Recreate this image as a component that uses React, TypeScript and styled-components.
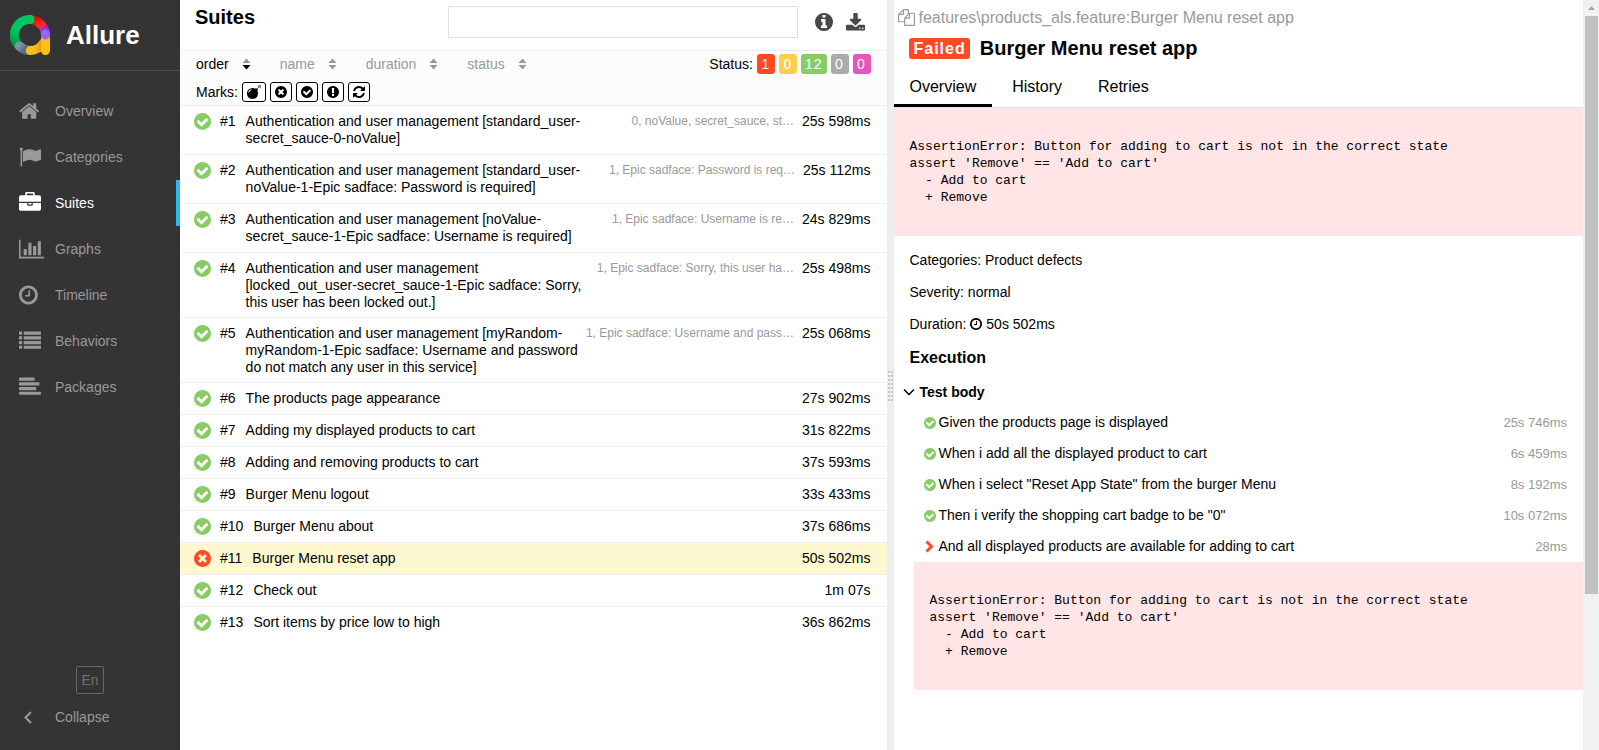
import React from 'react';
import styled, { createGlobalStyle } from 'styled-components';

const GlobalStyle = createGlobalStyle`
  *, *::before, *::after { box-sizing: border-box; }
  body {
    margin: 0;
    background: #fff;
    color: #000;
    font: 14px/17px "Liberation Sans", Arial, sans-serif;
  }
  button, input { font: inherit; color: inherit; margin: 0; }
  a { color: inherit; text-decoration: none; }
  h1, h2, h3, ul, p, pre { margin: 0; padding: 0; font-size: inherit; }
  ul { list-style: none; }
`;

const colors = {
  failed: '#ff4a24',
  broken: '#ffce4f',
  passed: '#88cc66',
  skipped: '#aaaaaa',
  unknown: '#e754bc',
};

/* ---------- icons ---------- */

const DISC =
  'm768 0q0 209-103 385.5t-279.5 279.5-385.5 103-385.5-103-279.5-279.5-103-385.5 103-385.5 279.5-279.5 385.5-103 385.5 103 279.5 279.5 103 385.5z';

const glyphs = {
  home: {
    box: '64 0 1792 1792',
    d: 'M1472 992v480q0 26-19 45t-45 19h-384v-384h-256v384h-384q-26 0-45-19t-19-45v-480q0-1 .5-3t.5-3l575-474 575 474q1 2 1 6zm223-69l-62 74q-8 9-21 11h-3q-13 0-21-7l-692-577-692 577q-12 8-24 7-13-2-21-11l-62-74q-8-10-7-23.5t11-21.5l719-599q32-26 76-26t76 26l244 204v-195q0-14 9-23t23-9h192q14 0 23 9t9 23v408l219 182q10 8 11 21.5t-7 23.5z',
  },
  flag: {
    box: '0 0 1792 1792',
    d: 'M320 256q0 72-64 110v1266q0 13-9.5 22.5t-22.5 9.5h-64q-13 0-22.5-9.5t-9.5-22.5v-1266q-64-38-64-110 0-53 37.5-90.5t90.5-37.5 90.5 37.5 37.5 90.5zm1472 64v763q0 25-12.5 38.5t-39.5 27.5q-215 116-369 116-61 0-123.5-22t-108.5-48-115.5-48-142.5-22q-192 0-464 146-17 9-33 9-26 0-45-19t-19-45v-742q0-32 31-55 21-14 79-43 236-120 421-120 107 0 200 29t219 88q38 19 88 19 54 0 117.5-21t110-47 88-47 54.5-21q26 0 45 19t19 45z',
  },
  briefcase: {
    box: '0 0 1792 1792',
    d: 'M640 256h512v-128h-512v128zm1152 640v480q0 66-47 113t-113 47h-1472q-66 0-113-47t-47-113v-480h672v160q0 26 19 45t45 19h320q26 0 45-19t19-45v-160h672zm-768 0v128h-256v-128h256zm768-480v384h-1792v-384q0-66 47-113t113-47h352v-160q0-40 28-68t68-28h576q40 0 68 28t28 68v160h352q66 0 113 47t47 113z',
  },
  chart: {
    box: '0 0 2048 1792',
    d: 'M640 896v512h-256v-512h256zm384-512v1024h-256v-1024h256zm1024 1152v128h-2048v-1536h128v1408h1920zm-640-896v768h-256v-768h256zm384-384v1152h-256v-1152h256z',
  },
  clock: {
    box: '128 0 1792 1792',
    d: 'M1024 544v448q0 14-9 23t-23 9h-320q-14 0-23-9t-9-23v-64q0-14 9-23t23-9h224v-352q0-14 9-23t23-9h64q14 0 23 9t9 23zm416 352q0-148-73-273t-198-198-273-73-273 73-198 198-73 273 73 273 198 198 273 73 273-73 198-198 73-273zM896 896' + DISC,
  },
  list: {
    box: '0 0 1792 1792',
    d: 'M0 128h256v256H0zM384 128h1408v256H384zM0 512h256v256H0zM384 512h1408v256H384zM0 896h256v256H0zM384 896h1408v256H384zM0 1280h256v256H0zM384 1280h1408v256H384z',
  },
  align: {
    box: '0 0 1792 1792',
    d: 'M64 128h1152q64 0 64 64v128q0 64-64 64H64q-64 0-64-64V192q0-64 64-64zM64 512h1536q64 0 64 64v128q0 64-64 64H64q-64 0-64-64V576q0-64 64-64zM64 896h1280q64 0 64 64v128q0 64-64 64H64q-64 0-64-64V960q0-64 64-64zM64 1280h1664q64 0 64 64v128q0 64-64 64H64q-64 0-64-64v-128q0-64 64-64z',
  },
  check: {
    box: '128 128 1536 1536',
    d: 'M1412 734q0-28-18-46l-91-90q-19-19-45-19t-45 19l-408 407-226-226q-19-19-45-19t-45 19l-91 90q-18 18-18 46 0 27 18 45l362 362q19 19 45 19 27 0 46-19l543-543q18-18 18-45zM896 896' + DISC,
  },
  cross: {
    box: '128 128 1536 1536',
    d: 'M1277 1122q0-26-19-45l-181-181 181-181q19-19 19-45 0-27-19-46l-90-90q-19-19-46-19-26 0-45 19l-181 181-181-181q-19-19-45-19-27 0-46 19l-90 90q-19 19-19 46 0 26 19 45l181 181-181 181q-19 19-19 45 0 27 19 46l90 90q19 19 46 19 26 0 45-19l181-181 181 181q19 19 45 19 27 0 46-19l90-90q19-19 19-46zM896 896' + DISC,
  },
  exclamation: {
    box: '128 128 1536 1536',
    d: 'M1024 1375v-190q0-14-9-23.5t-22-9.5h-192q-13 0-23 10t-10 23v190q0 13 10 23t23 10h192q13 0 22-9.5t9-23.5zm-2-344l18-621q0-12-10-18-10-8-24-8h-220q-14 0-24 8-10 6-10 18l17 621q0 10 10 17.5t24 7.5h185q14 0 23.5-7.5t10.5-17.5zM896 896' + DISC,
  },
  info: {
    box: '128 128 1536 1536',
    d: 'M1152 1376v-160q0-14-9-23t-23-9h-96v-512q0-14-9-23t-23-9h-320q-14 0-23 9t-9 23v160q0 14 9 23t23 9h96v320h-96q-14 0-23 9t-9 23v160q0 14 9 23t23 9h448q14 0 23-9t9-23zm-128-896v-160q0-14-9-23t-23-9h-192q-14 0-23 9t-9 23v160q0 14 9 23t23 9h192q14 0 23-9t9-23zM896 896' + DISC,
  },
  download: {
    box: '64 0 1664 1664',
    d: 'M1344 1344q0-26-19-45t-45-19-45 19-19 45 19 45 45 19 45-19 19-45zm256 0q0-26-19-45t-45-19-45 19-19 45 19 45 45 19 45-19 19-45zm128-224v320q0 40-28 68t-68 28h-1472q-40 0-68-28t-28-68v-320q0-40 28-68t68-28h465l135 136q58 56 136 56t136-56l136-136h464q40 0 68 28t28 68zm-325-569q17 41-14 70l-448 448q-18 19-45 19t-45-19l-448-448q-31-29-14-70 17-39 59-39h256v-448q0-26 19-45t45-19h256q26 0 45 19t19 45v448h256q42 0 59 39z',
  },
  refresh: {
    box: '128 128 1536 1536',
    d: 'M1639 1056q0 5-1 7-64 268-268 434.5t-478 166.5q-146 0-282.5-55t-243.5-157l-129 129q-19 19-45 19t-45-19-19-45v-448q0-26 19-45t45-19h448q26 0 45 19t19 45-19 45l-137 137q71 66 161 102t187 36q134 0 250-65t186-179q11-17 53-117 8-23 30-23h192q13 0 22.5 9.5t9.5 22.5zm25-800v448q0 26-19 45t-45 19h-448q-26 0-45-19t-19-45 19-45l138-138q-148-137-349-137-134 0-250 65t-186 179q-11 17-53 117-8 23-30 23h-199q-13 0-22.5-9.5t-9.5-22.5v-7q65-268 270-434.5t480-166.5q146 0 284 55.5t245 156.5l130-129q19-19 45-19t45 19 19 45z',
  },
  bomb: {
    box: '0 0 1792 1792',
    d: 'M571 589q-10-25-34-35t-49 0q-108 44-191 127t-127 191q-10 25 0 49t35 34q13 5 24 5 42 0 60-40 34-84 98.5-148.5t148.5-98.5q25-11 35-35t0-49zm942-356l46 46-244 243 68 68q19 19 19 45.5t-19 45.5l-64 64q89 161 89 343 0 143-55.5 273.5t-150 225-225 150-273.5 55.5-273.5-55.5-225-150-150-225-55.5-273.5 55.5-273.5 150-225 225-150 273.5-55.5q182 0 343 89l64-64q19-19 45.5-19t45.5 19l68 68zm8-56q-10 10-22 10-13 0-23-10l-91-90q-9-10-9-23t9-23q10-9 23-9t23 9l90 91q10 9 10 22.5t-10 22.5zm230 230q-11 9-23 9t-23-9l-90-91q-10-9-10-22.5t10-22.5q9-10 22.5-10t22.5 10l91 90q9 10 9 23t-9 23zm41-183q0 14-9 23t-23 9h-96q-14 0-23-9t-9-23 9-23 23-9h96q14 0 23 9t9 23zm-192-192v96q0 14-9 23t-23 9-23-9-9-23v-96q0-14 9-23t23-9 23 9 9 23zm151 55l-91 90q-10 10-22 10-13 0-23-10-10-9-10-22.5t10-22.5l90-91q10-9 23-9t23 9q9 10 9 23t-9 23z',
  },
  files: {
    box: '0 0 1792 1792',
    d: 'M1696 384q40 0 68 28t28 68v1216q0 40-28 68t-68 28h-960q-40 0-68-28t-28-68v-288h-544q-40 0-68-28t-28-68v-672q0-40 20-88t48-76l408-408q28-28 76-48t88-20h416q40 0 68 28t28 68v328q68-40 128-40h416zm-544 213l-299 299h299v-299zm-640-384l-299 299h299v-299zm196 647l316-316v-416h-384v416q0 40-28 68t-68 28h-416v640h512v-256q0-40 20-88t48-76zm956 804v-1152h-384v416q0 40-28 68t-68 28h-416v640h896z',
  },
};

type GlyphName = keyof typeof glyphs;

const Svg = styled.svg`
  display: block;
  flex: none;
`;

function Glyph({ name, size, width, color }: { name: GlyphName; size: number; width?: number; color?: string }) {
  const g = glyphs[name];
  return (
    <Svg width={width ?? size} height={size} viewBox={g.box} fill={color ?? 'currentColor'} fillRule="evenodd" aria-hidden="true">
      <path d={g.d} />
    </Svg>
  );
}

function Logo() {
  return (
    <Svg width="40" height="40" viewBox="0 0 120 120" fill="none" strokeWidth="27" strokeLinecap="round" aria-hidden="true">
      <defs>
        <linearGradient id="purple" x1="0" y1="0" x2="0" y2="1">
          <stop offset="0" stopColor="#7a1fc0" />
          <stop offset="1" stopColor="#9664ff" />
        </linearGradient>
        <linearGradient id="red" x1="0" y1="0" x2="1" y2="1">
          <stop offset="0" stopColor="#f00000" />
          <stop offset="1" stopColor="#ff2a2a" />
        </linearGradient>
        <linearGradient id="green" x1="0" y1="1" x2="0.4" y2="0">
          <stop offset="0" stopColor="#00a04a" />
          <stop offset="0.6" stopColor="#00c764" />
        </linearGradient>
        <linearGradient id="slate" x1="0" y1="0" x2="1" y2="0.6">
          <stop offset="0" stopColor="#8391a8" />
          <stop offset="1" stopColor="#5f6e86" />
        </linearGradient>
        <linearGradient id="amber" x1="0" y1="0" x2="1" y2="0">
          <stop offset="0.3" stopColor="#ffbe1a" />
          <stop offset="1" stopColor="#f88a00" />
        </linearGradient>
      </defs>
      <path d="M28 93A46.500 46.500 0 0 0 60 106.500" stroke="url(#slate)" />
      <path d="M92 27A46.500 46.500 0 0 1 106.500 62" stroke="url(#purple)" />
      <path d="M66 13.900A46.500 46.500 0 0 1 93 28" stroke="url(#red)" />
      <path d="M60 13.500A46.500 46.500 0 0 0 21 86" stroke="url(#green)" />
      <path d="M28 93A46.500 46.500 0 0 0 45 104" stroke="url(#slate)" />
      <path d="M61 106.500A46.500 46.500 0 0 0 100 84" stroke="url(#amber)" />
      <path d="M106.500 72V106.500" stroke="#ffbe1a" />
      <path d="M106.400 58A46.500 46.500 0 0 1 106.500 60" stroke="#9664ff" />
      <path d="M60 13.500H59" stroke="#00c764" />
    </Svg>
  );
}

function Chevron({ direction }: { direction: 'left' | 'right' | 'down' }) {
  const shape = {
    left: { w: 8, h: 13, d: 'M7 1 1.500 6.500 7 12', s: 2 },
    right: { w: 12, h: 13, d: 'M2.500 1.500 7.500 6.500 2.500 11.500', s: 3 },
    down: { w: 12, h: 8, d: 'M1 1.500 6 6.500 11 1.500', s: 1.5 },
  }[direction];
  return (
    <Svg width={shape.w} height={shape.h} viewBox={`0 0 ${shape.w} ${shape.h}`} fill="none" stroke="currentColor" strokeWidth={shape.s} aria-hidden="true">
      <path d={shape.d} />
    </Svg>
  );
}

function SortArrows({ active }: { active?: boolean }) {
  return (
    <Svg width="9" height="12" viewBox="0 0 10 12" aria-hidden="true">
      <path d="M5 0 9.500 5H.5z" fill="#999" />
      <path d="M5 12 .5 7h9z" fill={active ? '#000' : '#999'} />
    </Svg>
  );
}

/* ---------- shell ---------- */

const Shell = styled.div`
  display: flex;
  height: 100vh;
  overflow: hidden;
`;

const Sidebar = styled.nav`
  flex: none;
  width: 180px;
  display: flex;
  flex-direction: column;
  background: #343434;
  color: #999;
`;

const Brand = styled.a`
  display: flex;
  align-items: center;
  gap: 16px;
  height: 71px;
  padding: 0 10px;
  border-bottom: 1px solid #505050;
  color: #fff;
  font-size: 26px;
  line-height: 30px;
  font-weight: bold;
`;

const Menu = styled.ul`
  flex: 1;
  padding-top: 17px;
`;

const MenuLink = styled.a<{ $active?: boolean }>`
  display: flex;
  align-items: center;
  height: 46px;
  padding-left: 19px;
  color: ${(p) => (p.$active ? '#fff' : '#999')};
  border-right: 4px solid ${(p) => (p.$active ? '#2fb4f6' : 'transparent')};
`;

const MenuIcon = styled.span`
  width: 36px;
`;

const LanguageButton = styled.button`
  align-self: center;
  width: 28px;
  height: 28px;
  padding: 0;
  border: 1px solid #666;
  border-radius: 2px;
  background: none;
  color: #6f6f6f;
`;

const CollapseButton = styled.button`
  display: flex;
  align-items: center;
  gap: 23px;
  height: 46px;
  margin-bottom: 10px;
  padding: 0 0 0 24px;
  border: 0;
  background: none;
`;

/* ---------- suites pane ---------- */

const SuitesPane = styled.section`
  flex: 0 0 calc(50% - 3px - 90px);
  min-width: 0;
`;

const PaneHeader = styled.header`
  display: flex;
  align-items: flex-start;
  height: 51px;
  padding: 6px 22px 0 15px;
  border-bottom: 1px solid #eceff1;
`;

const PaneTitle = styled.h1`
  flex: 1;
  font-size: 20px;
  line-height: 22px;
`;

const SearchInput = styled.input`
  width: 350px;
  height: 32px;
  padding: 0 8px;
  border: 1px solid #e0e0e0;
  background: #fff;
`;

const HeaderTools = styled.div`
  display: flex;
  align-items: center;
  gap: 13px;
  height: 32px;
  padding-left: 17px;
  color: #484848;
`;

const IconButton = styled.button`
  display: block;
  padding: 0;
  border: 0;
  background: none;
`;

const Filters = styled.div`
  height: 55px;
  padding: 3px 16px 0 16px;
  background: #fcfcfc;
  border-bottom: 1px solid #eceff1;
`;

const FilterRow = styled.div`
  display: flex;
  align-items: center;
  height: 20px;
  gap: 4px;
  margin-bottom: 8px;
`;

const Sorters = styled.div`
  display: flex;
  flex: 1;
  gap: 29px;
`;

const Sorter = styled.button<{ $active?: boolean }>`
  display: flex;
  align-items: center;
  gap: 13px;
  padding: 0;
  border: 0;
  background: none;
  color: ${(p) => (p.$active ? '#000' : '#999')};
`;

const CountButton = styled.button<{ $color: string }>`
  min-width: 18px;
  height: 20px;
  padding: 0 4px;
  border: 0;
  border-radius: 3px;
  background: ${(p) => p.$color};
  color: #fff;
  letter-spacing: 1px;
`;

const MarkButton = styled.button`
  display: flex;
  align-items: center;
  justify-content: center;
  min-width: 22px;
  height: 20px;
  padding: 0 4px;
  border: 1px solid #000;
  border-radius: 3px;
  background: #fff;
`;

const CaseRow = styled.a<{ $selected?: boolean; $last?: boolean; $detailed?: boolean }>`
  display: flex;
  align-items: flex-start;
  min-height: ${(p) => (p.$detailed ? 49 : 32)}px;
  padding: 7px 16px 6px 14px;
  border-bottom: 1px solid ${(p) => (p.$last ? 'transparent' : '#eceff1')};
  background: ${(p) => (p.$selected ? '#fdf8cf' : 'transparent')};
`;

const CaseOrder = styled.span`
  padding: 0 10px 0 9px;
`;

const CaseName = styled.span`
  flex: 0 1 338px;
`;

const CaseParams = styled.span`
  flex: 1;
  color: #999;
  font-size: 12px;
  text-align: right;
  white-space: nowrap;
`;

const CaseDuration = styled.span`
  flex: none;
  margin-left: auto;
  padding-left: 8px;
`;

const Splitter = styled.div`
  flex: none;
  width: 7px;
  display: flex;
  align-items: center;
  justify-content: center;
  padding-top: 22px;
  background: #eceff1;
`;

/* ---------- test case pane ---------- */

const CasePane = styled.section`
  flex: 1;
  min-width: 0;
  padding-top: 6px;
`;

const Breadcrumb = styled.div`
  display: flex;
  align-items: center;
  gap: 4px;
  height: 22px;
  padding-left: 4px;
  color: #999;
  font-size: 16px;
`;

const CaseTitle = styled.h2`
  display: flex;
  align-items: center;
  gap: 10px;
  height: 42px;
  padding: 0 0 2px 15px;
  font-size: 20px;
  line-height: 22px;
`;

const StatusLabel = styled.span`
  padding: 2px 4px 2px 5px;
  border-radius: 3px;
  background: ${colors.failed};
  color: #fff;
  font-size: 16px;
  line-height: 17px;
  letter-spacing: 1px;
`;

const Tabs = styled.div`
  display: flex;
  gap: 4px;
  height: 38px;
  border-bottom: 1px solid #e0e0e0;
`;

const Tab = styled.button<{ $active?: boolean }>`
  height: 37px;
  padding: 0 16px 2px;
  border: 0;
  border-bottom: 3px solid ${(p) => (p.$active ? '#000' : 'transparent')};
  background: none;
  font-size: 16px;
`;

const ErrorTrace = styled.pre<{ $nested?: boolean }>`
  margin-left: ${(p) => (p.$nested ? 20 : 0)}px;
  padding: 30px 16px;
  background: #ffe5e5;
  font: 13px/17px Consolas, "Liberation Mono", monospace;
`;

const Facts = styled.div`
  padding: 8px 16px 0;
`;

const Fact = styled.p`
  display: flex;
  align-items: center;
  gap: 4px;
  height: 32px;
`;

const SectionTitle = styled.h3`
  padding: 9px 16px 10px;
  font-size: 16px;
  line-height: 18px;
`;

const StageToggle = styled.button`
  display: flex;
  align-items: center;
  gap: 5px;
  height: 30px;
  padding: 0 0 0 9px;
  border: 0;
  background: none;
  font-weight: bold;
`;

const Step = styled.li`
  display: flex;
  align-items: center;
  gap: 3px;
  height: 31px;
  padding: 0 16px 0 30px;
`;

const StepMark = styled.span<{ $color: string }>`
  width: 12px;
  color: ${(p) => p.$color};
`;

const StepTime = styled.span`
  margin-left: auto;
  color: #999;
  font-size: 13px;
`;

const ScrollTrack = styled.div`
  flex: none;
  width: 16px;
  display: flex;
  flex-direction: column;
  align-items: center;
  background: #f1f1f1;
`;

const ScrollUp = styled.div`
  display: flex;
  align-items: center;
  height: 16px;
`;

const ScrollThumb = styled.div`
  width: 13px;
  height: 77%;
  background: #c1c1c1;
`;

/* ---------- data ---------- */

const menu: { icon: GlyphName; label: string; wide?: boolean }[] = [
  { icon: 'home', label: 'Overview' },
  { icon: 'flag', label: 'Categories' },
  { icon: 'briefcase', label: 'Suites' },
  { icon: 'chart', label: 'Graphs', wide: true },
  { icon: 'clock', label: 'Timeline' },
  { icon: 'list', label: 'Behaviors' },
  { icon: 'align', label: 'Packages' },
];

const counts: [string, string, number][] = [
  ['Failed', colors.failed, 1],
  ['Broken', colors.broken, 0],
  ['Passed', colors.passed, 12],
  ['Skipped', colors.skipped, 0],
  ['Unknown', colors.unknown, 0],
];

const marks: [GlyphName, string, number][] = [
  ['bomb', 'Flaky', 14],
  ['cross', 'New failed', 12],
  ['check', 'New passed', 12],
  ['exclamation', 'New broken', 12],
  ['refresh', 'Retries', 12],
];

interface TestCase {
  name: string;
  time: string;
  params?: string;
  failed?: boolean;
}

const cases: TestCase[] = [
  { name: 'Authentication and user management [standard_user-secret_sauce-0-noValue]', params: '0, noValue, secret_sauce, st…', time: '25s 598ms' },
  { name: 'Authentication and user management [standard_user-noValue-1-Epic sadface: Password is required]', params: '1, Epic sadface: Password is req…', time: '25s 112ms' },
  { name: 'Authentication and user management [noValue-secret_sauce-1-Epic sadface: Username is required]', params: '1, Epic sadface: Username is re…', time: '24s 829ms' },
  { name: 'Authentication and user management [locked_out_user-secret_sauce-1-Epic sadface: Sorry, this user has been locked out.]', params: '1, Epic sadface: Sorry, this user ha…', time: '25s 498ms' },
  { name: 'Authentication and user management [myRandom-myRandom-1-Epic sadface: Username and password do not match any user in this service]', params: '1, Epic sadface: Username and pass…', time: '25s 068ms' },
  { name: 'The products page appearance', time: '27s 902ms' },
  { name: 'Adding my displayed products to cart', time: '31s 822ms' },
  { name: 'Adding and removing products to cart', time: '37s 593ms' },
  { name: 'Burger Menu logout', time: '33s 433ms' },
  { name: 'Burger Menu about', time: '37s 686ms' },
  { name: 'Burger Menu reset app', time: '50s 502ms', failed: true },
  { name: 'Check out', time: '1m 07s' },
  { name: 'Sort items by price low to high', time: '36s 862ms' },
];

const steps: TestCase[] = [
  { name: 'Given the products page is displayed', time: '25s 746ms' },
  { name: 'When i add all the displayed product to cart', time: '6s 459ms' },
  { name: 'When i select "Reset App State" from the burger Menu', time: '8s 192ms' },
  { name: 'Then i verify the shopping cart badge to be "0"', time: '10s 072ms' },
  { name: 'And all displayed products are available for adding to cart', time: '28ms', failed: true },
];

const trace = `AssertionError: Button for adding to cart is not in the correct state
assert 'Remove' == 'Add to cart'
  - Add to cart
  + Remove`;

/* ---------- page ---------- */

export default function App() {
  return (
    <Shell>
      <GlobalStyle />
      <Sidebar>
        <Brand href="#">
          <Logo />
          Allure
        </Brand>
        <Menu>
          {menu.map((m) => (
            <li key={m.label}>
              <MenuLink href={`#${m.label.toLowerCase()}`} $active={m.label === 'Suites'}>
                <MenuIcon>
                  <Glyph name={m.icon} size={22} width={m.wide ? 25 : 22} />
                </MenuIcon>
                {m.label}
              </MenuLink>
            </li>
          ))}
        </Menu>
        <LanguageButton>En</LanguageButton>
        <CollapseButton>
          <Chevron direction="left" />
          Collapse
        </CollapseButton>
      </Sidebar>

      <SuitesPane>
        <PaneHeader>
          <PaneTitle>Suites</PaneTitle>
          <SearchInput type="search" aria-label="Search" />
          <HeaderTools>
            <IconButton aria-label="Info">
              <Glyph name="info" size={18} />
            </IconButton>
            <IconButton aria-label="Download CSV">
              <Glyph name="download" size={19} />
            </IconButton>
          </HeaderTools>
        </PaneHeader>
        <Filters>
          <FilterRow>
            <Sorters>
              {['order', 'name', 'duration', 'status'].map((s, i) => (
                <Sorter key={s} $active={i === 0}>
                  {s}
                  <SortArrows active={i === 0} />
                </Sorter>
              ))}
            </Sorters>
            Status:
            {counts.map(([label, color, n]) => (
              <CountButton key={label} $color={color} aria-label={`${label}: ${n}`}>
                {n}
              </CountButton>
            ))}
          </FilterRow>
          <FilterRow>
            Marks:
            {marks.map(([icon, label, size]) => (
              <MarkButton key={label} aria-label={label}>
                <Glyph name={icon} size={size} />
              </MarkButton>
            ))}
          </FilterRow>
        </Filters>
        {cases.map((c, i) => (
          <CaseRow
            key={c.name}
            href={`#case-${i + 1}`}
            $selected={c.failed}
            $last={i === cases.length - 1}
            $detailed={Boolean(c.params)}
          >
            <Glyph name={c.failed ? 'cross' : 'check'} size={17} color={c.failed ? colors.failed : colors.passed} />
            <CaseOrder>#{i + 1}</CaseOrder>
            <CaseName>{c.name}</CaseName>
            {c.params && <CaseParams>{c.params}</CaseParams>}
            <CaseDuration>{c.time}</CaseDuration>
          </CaseRow>
        ))}
      </SuitesPane>

      <Splitter>
        <Svg width="5" height="30" viewBox="0 0 5 30" fill="#c3c7c9" aria-hidden="true">
          {[0, 4, 8, 12, 16, 20, 24, 28].map((y) => (
            <path key={y} d={`M0 ${y}h2v2h-2zM3 ${y}h2v2h-2z`} />
          ))}
        </Svg>
      </Splitter>

      <CasePane>
        <Breadcrumb>
          <Glyph name="files" size={17} />
          features\products_als.feature:Burger Menu reset app
        </Breadcrumb>
        <CaseTitle>
          <StatusLabel>Failed</StatusLabel>
          Burger Menu reset app
        </CaseTitle>
        <Tabs role="tablist">
          {['Overview', 'History', 'Retries'].map((t, i) => (
            <Tab key={t} role="tab" aria-selected={i === 0} $active={i === 0}>
              {t}
            </Tab>
          ))}
        </Tabs>
        <ErrorTrace>{trace}</ErrorTrace>
        <Facts>
          <Fact>Categories: Product defects</Fact>
          <Fact>Severity: normal</Fact>
          <Fact>
            Duration:
            <Svg width="12" height="12" viewBox="128 128 1536 1536" fill="currentColor" fillRule="evenodd" aria-hidden="true">
              <path d={glyphs.clock.d} />
            </Svg>
            50s 502ms
          </Fact>
        </Facts>
        <SectionTitle>Execution</SectionTitle>
        <StageToggle aria-expanded="true">
          <Chevron direction="down" />
          Test body
        </StageToggle>
        <ul>
          {steps.map((s) => (
            <Step key={s.name}>
              <StepMark $color={s.failed ? colors.failed : colors.passed}>
                {s.failed ? <Chevron direction="right" /> : <Glyph name="check" size={12} />}
              </StepMark>
              {s.name}
              <StepTime>{s.time}</StepTime>
            </Step>
          ))}
        </ul>
        <ErrorTrace $nested>{trace}</ErrorTrace>
      </CasePane>

      <ScrollTrack aria-hidden="true">
        <ScrollUp>
          <Svg width="7" height="4" viewBox="0 0 7 4" fill="#a3a3a3">
            <path d="M3.500 0 7 4H0z" />
          </Svg>
        </ScrollUp>
        <ScrollThumb />
      </ScrollTrack>
    </Shell>
  );
}
